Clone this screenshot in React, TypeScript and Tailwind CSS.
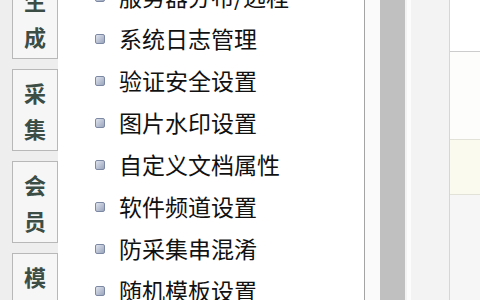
const tabs = [['生', '成'], ['采', '集'], ['会', '员'], ['模', '板']];

const items = [
  '服务器分布/远程',
  '系统日志管理',
  '验证安全设置',
  '图片水印设置',
  '自定义文档属性',
  '软件频道设置',
  '防采集串混淆',
  '随机模板设置',
];

function Bullet() {
  return (
    <span className="w-[10px] h-[10px] shrink-0 rounded-[2px] border border-[#7d88a3] bg-gradient-to-br from-[#dfe4ee] to-[#9aa5bd]" />
  );
}

export default function App() {
  return (
    <div
      className="w-[480px] h-[300px] overflow-hidden flex bg-white"
      style={{ fontFamily: '"Noto Sans CJK SC", "Noto Sans", sans-serif' }}
    >
      {/* left tabs */}
      <div className="w-[58px] shrink-0 bg-[#eeeeee] pl-[12px] flex flex-col gap-[10px] -mt-[23px]">
        {tabs.map((t, i) => (
          <div
            key={i}
            className="w-[46px] h-[82px] shrink-0 bg-[#f6f6f6] border border-[#b8b8b8] flex flex-col items-center justify-center text-[22px] font-bold leading-[36px] text-[#3b4d45]"
          >
            <span>{t[0]}</span>
            <span>{t[1]}</span>
          </div>
        ))}
      </div>

      {/* menu list */}
      <div className="w-[306px] shrink-0 bg-white flex flex-col -mt-[25px]">
        {items.map((it) => (
          <div key={it} className="h-[42px] shrink-0 flex items-center pl-[37px] gap-[14px]">
            <span className="mt-[2px] flex"><Bullet /></span>
            <span className="text-[23px] leading-none text-[#111111] whitespace-nowrap">{it}</span>
          </div>
        ))}
      </div>

      {/* divider + scroll strip */}
      <div className="w-[1px] shrink-0 bg-[#a4a4a4]" />
      <div className="w-[15px] shrink-0 bg-[#fafafa]" />
      <div className="w-[25px] shrink-0 bg-[#c0c0c0]" />
      <div className="w-[44px] shrink-0 bg-[#f3f3f3] flex">
        <div className="w-[2px] shrink-0" />
        <div className="w-[4px] shrink-0 bg-[#fcfcfc]" />
      </div>
      <div className="w-[1px] shrink-0 bg-[#d6d6d6]" />

      {/* right content edge */}
      <div className="flex-1 flex flex-col">
        <div className="h-[51px] shrink-0 bg-white" />
        <div className="h-[88px] shrink-0 border-t border-[#cccccc] bg-[#fdfdfb]" />
        <div className="h-[56px] shrink-0 border-t border-b border-[#e2e2d8] bg-[#fafaee]" />
        <div className="flex-1 bg-[#f6f6f6]" />
      </div>
    </div>
  );
}
